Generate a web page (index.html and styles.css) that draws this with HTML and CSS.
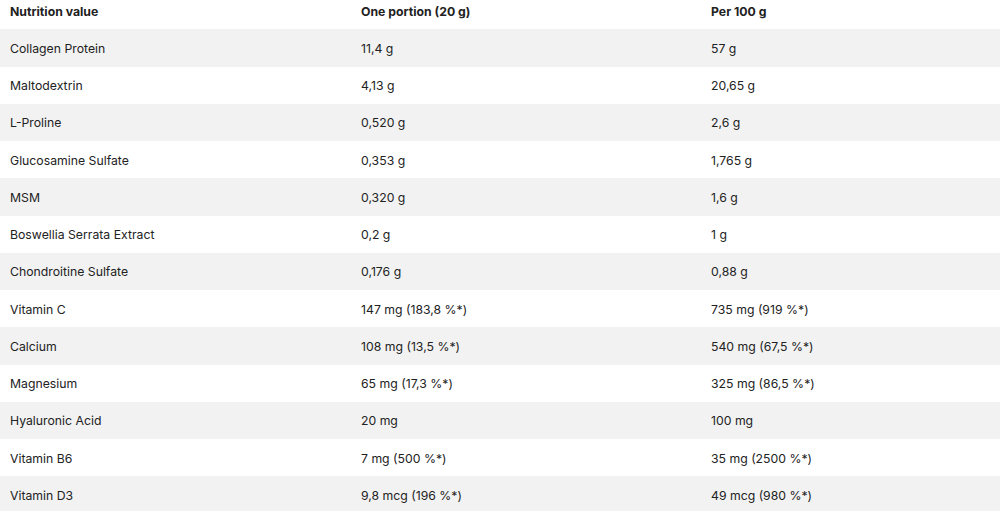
FILE: index.html
```html
<!DOCTYPE html>
<html>
<head>
<meta charset="utf-8">
<link rel="stylesheet" href="styles.css">
</head>
<body>
<div class="viewport">
<table class="nutri">
  <colgroup><col class="c1"><col class="c2"><col class="c3"></colgroup>
  <thead>
    <tr><th>Nutrition value</th><th>One portion (20 g)</th><th>Per 100 g</th></tr>
  </thead>
  <tbody>
    <tr><td>Collagen Protein</td><td>11,4 g</td><td>57 g</td></tr>
    <tr><td>Maltodextrin</td><td>4,13 g</td><td>20,65 g</td></tr>
    <tr><td>L-Proline</td><td>0,520 g</td><td>2,6 g</td></tr>
    <tr><td>Glucosamine Sulfate</td><td>0,353 g</td><td>1,765 g</td></tr>
    <tr><td>MSM</td><td>0,320 g</td><td>1,6 g</td></tr>
    <tr><td>Boswellia Serrata Extract</td><td>0,2 g</td><td>1 g</td></tr>
    <tr><td>Chondroitine Sulfate</td><td>0,176 g</td><td>0,88 g</td></tr>
    <tr><td>Vitamin C</td><td>147 mg (183,8 %*)</td><td>735 mg (919 %*)</td></tr>
    <tr><td>Calcium</td><td>108 mg (13,5 %*)</td><td>540 mg (67,5 %*)</td></tr>
    <tr><td>Magnesium</td><td>65 mg (17,3 %*)</td><td>325 mg (86,5 %*)</td></tr>
    <tr><td>Hyaluronic Acid</td><td>20 mg</td><td>100 mg</td></tr>
    <tr><td>Vitamin B6</td><td>7 mg (500 %*)</td><td>35 mg (2500 %*)</td></tr>
    <tr><td>Vitamin D3</td><td>9,8 mcg (196 %*)</td><td>49 mcg (980 %*)</td></tr>
  </tbody>
</table>
</div>
</body>
</html>
```
FILE: styles.css
```css
html, body {
  margin: 0;
  padding: 0;
  background: #fff;
}
.viewport {
  width: 1000px;
  height: 511px;
  overflow: hidden;
}
.nutri {
  border-collapse: collapse;
  table-layout: fixed;
  width: 1051px;
  margin-top: -8px;
  font-family: Inter, "Noto Sans", sans-serif;
  font-size: 12.25px;
  color: #222;
}
.c1 { width: 351px; }
.c2 { width: 350px; }
.c3 { width: 350px; }
.nutri th, .nutri td {
  height: 36.25px;
  padding: 1px 10px 0;
  text-align: left;
  vertical-align: middle;
  white-space: nowrap;
}
.nutri th {
  font-weight: 700;
}
.nutri td {
  font-weight: 400;
}
.nutri tbody tr:nth-child(odd) {
  background: #f2f2f2;
}
```
